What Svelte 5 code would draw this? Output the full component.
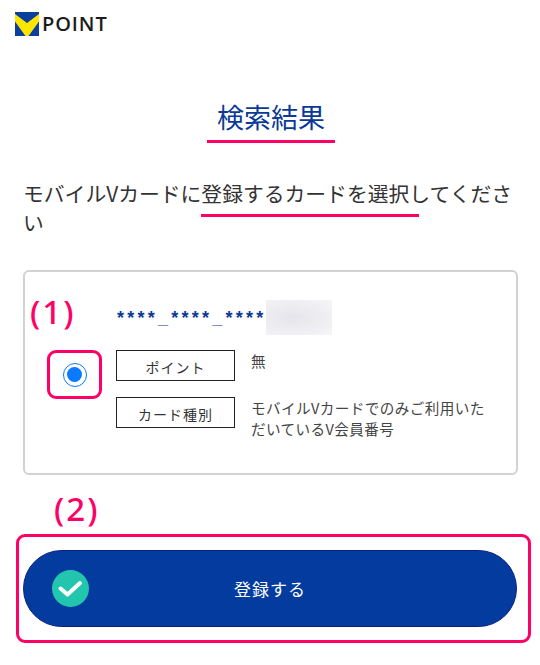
<script>
  const rows = [
    { label: 'ポイント', value: '無' },
    { label: 'カード種別', value: 'モバイルVカードでのみご利用いただいているV会員番号' }
  ];
</script>

<div class="page">
  <header class="header">
    <svg class="logo" viewBox="0 0 24 24" width="24" height="24" aria-hidden="true">
      <rect width="24" height="24" fill="#0b3f9e" />
      <path d="M0 2L12 11L24 2V9.5L13.5 24H10.5L0 9.5Z" fill="#ffe600" />
    </svg>
    <span class="brand">POINT</span>
  </header>

  <h1 class="title">検索結果</h1>

  <p class="lead">
    モバイルVカードに登録するカードを選択してください
    <span class="lead-mark"></span>
  </p>

  <section class="card">
    <span class="note note-one">(1)</span>
    <div class="radio-cell">
      <span class="radio-frame">
        <span class="radio"><span class="dot"></span></span>
      </span>
    </div>
    <div class="info">
      <div class="number">
        <span class="digits">****_****_****</span>
        <span class="blur"></span>
      </div>
      {#each rows as row}
        <div class="row">
          <span class="label">{row.label}</span>
          <span class="value">{row.value}</span>
        </div>
      {/each}
    </div>
  </section>

  <div class="action">
    <span class="note note-two">(2)</span>
    <button class="submit" type="button">
      <svg class="check" viewBox="0 0 37 37" width="37" height="37" aria-hidden="true">
        <circle cx="18.5" cy="18.5" r="18.5" fill="#22c5ad" />
        <path d="M8.5 18.5L15.5 24.5L28 13" fill="none" stroke="#fff" stroke-width="4" stroke-linecap="round" stroke-linejoin="round" />
      </svg>
      <span>登録する</span>
    </button>
  </div>
</div>

<style>
  :global(body) {
    margin: 0;
    background: #fff;
  }

  .page {
    position: relative;
    width: 540px;
    height: 665px;
    overflow: hidden;
    box-sizing: border-box;
    font-family: "Noto Sans CJK JP", "Noto Sans", sans-serif;
    color: #333;
  }

  .header {
    display: flex;
    align-items: center;
    gap: 3px;
    height: 24px;
    padding: 12px 0 0 15px;
  }

  .logo {
    display: block;
  }

  .brand {
    font-family: "Open Sans", "Noto Sans", sans-serif;
    font-size: 20px;
    font-weight: 600;
    letter-spacing: 0.9px;
    color: #1c1c1c;
    line-height: 24px;
  }

  .title {
    box-sizing: border-box;
    width: 128px;
    height: 49px;
    margin: 58px 0 0 207px;
    border-bottom: 3px solid #ff0066;
    font-size: 27px;
    font-weight: 400;
    line-height: 46px;
    text-align: center;
    color: #0b3a96;
  }

  .lead {
    position: relative;
    height: 58px;
    margin: 36px 15px 0 23px;
    font-size: 20.8px;
    line-height: 29px;
    color: #333;
  }

  .lead-mark {
    position: absolute;
    left: 178px;
    top: 35px;
    width: 218px;
    height: 3px;
    background: #ff0066;
  }

  .card {
    position: relative;
    display: flex;
    box-sizing: border-box;
    width: 495px;
    height: 205px;
    margin: 33px 0 0 23px;
    border: 2px solid #d2d2d2;
    border-radius: 6px;
  }

  .radio-cell {
    width: 91px;
    flex: none;
    display: flex;
    justify-content: flex-end;
    padding: 78px 14px 0 0;
    box-sizing: border-box;
  }

  .radio-frame {
    display: flex;
    align-items: center;
    justify-content: center;
    box-sizing: border-box;
    width: 55px;
    height: 49px;
    border: 3px solid #ff0066;
    border-radius: 9px;
  }

  .radio {
    display: flex;
    align-items: center;
    justify-content: center;
    box-sizing: border-box;
    width: 24px;
    height: 24px;
    border: 1.5px solid #0a7aff;
    border-radius: 50%;
  }

  .dot {
    width: 15px;
    height: 15px;
    background: #0a7aff;
    border-radius: 50%;
  }

  .info {
    flex: 1;
    padding-top: 27px;
  }

  .number {
    display: flex;
    align-items: center;
    height: 36px;
    margin-bottom: 15px;
    font-family: "Liberation Sans", sans-serif;
    font-size: 18px;
    font-weight: 700;
    letter-spacing: 3.25px;
    color: #0b3a96;
  }

  .digits {
    padding: 3px 0 0 1px;
  }

  .blur {
    width: 66px;
    height: 35px;
    margin-left: -1px;
    background: radial-gradient(ellipse at 40% 50%, #e4e4ea 0%, #efeff3 60%, #f6f6f8 100%);
  }

  .row {
    display: flex;
    gap: 16px;
    margin-bottom: 16px;
  }

  .row:last-child {
    margin-bottom: 0;
  }

  .label {
    flex: none;
    box-sizing: border-box;
    width: 119px;
    height: 31px;
    border: 1px solid #222;
    font-size: 14px;
    line-height: 32px;
    letter-spacing: 1px;
    text-align: center;
    color: #333;
  }

  .value {
    width: 240px;
    font-size: 14.6px;
    line-height: 21px;
    letter-spacing: 0.4px;
    color: #444;
  }

  .note {
    position: absolute;
    font-family: "Noto Sans", sans-serif;
    font-size: 33px;
    font-weight: 500;
    line-height: 1;
    letter-spacing: 2px;
    color: #ff0066;
  }

  .note-one {
    left: 5px;
    top: 23px;
  }

  .note-two {
    left: 35px;
    top: -45px;
  }

  .action {
    position: relative;
    box-sizing: border-box;
    width: 515px;
    height: 109px;
    margin: 59px 0 0 16px;
    padding: 13px 0 0 4px;
    border: 3px solid #ff0066;
    border-radius: 9px;
  }

  .submit {
    position: relative;
    display: flex;
    align-items: center;
    justify-content: center;
    box-sizing: border-box;
    width: 494px;
    height: 77px;
    padding: 0;
    margin: 0;
    border: 1px solid #0b1f80;
    border-radius: 39px;
    background: #033c9e;
    color: #fff;
    font-family: inherit;
    font-size: 17px;
    letter-spacing: 1px;
  }

  .check {
    position: absolute;
    left: 28px;
    top: 19px;
  }
</style>
